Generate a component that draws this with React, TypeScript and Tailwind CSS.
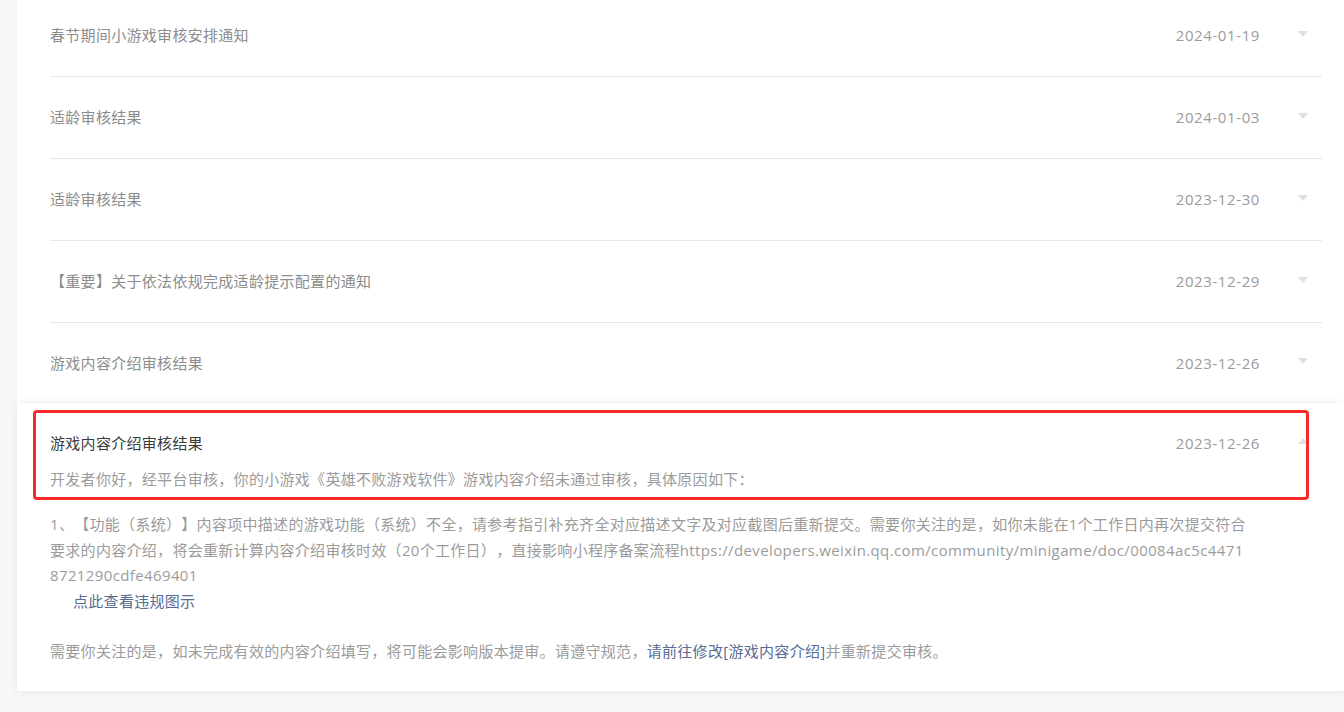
const FONT = {
  fontFamily: '"Open Sans", "Noto Sans CJK SC", "Microsoft YaHei", sans-serif',
};

type Notice = { title: string; date: string };

const notices: Notice[] = [
  { title: '春节期间小游戏审核安排通知', date: '2024-01-19' },
  { title: '适龄审核结果', date: '2024-01-03' },
  { title: '适龄审核结果', date: '2023-12-30' },
  { title: '【重要】关于依法依规完成适龄提示配置的通知', date: '2023-12-29' },
  { title: '游戏内容介绍审核结果', date: '2023-12-26' },
];

const reason =
  '1、【功能（系统）】内容项中描述的游戏功能（系统）不全，请参考指引补充齐全对应描述文字及对应截图后重新提交。需要你关注的是，如你未能在1个工作日内再次提交符合要求的内容介绍，将会重新计算内容介绍审核时效（20个工作日），直接影响小程序备案流程';
const docUrl = 'https://developers.weixin.qq.com/community/minigame/doc/00084ac5c44718721290cdfe469401';

function Caret({ up }: { up?: boolean }) {
  return (
    <svg width="10" height="6" viewBox="0 0 10 6" className="shrink-0">
      <path d={up ? 'M0 6 L5 0 L10 6 Z' : 'M0 0 L10 0 L5 6 Z'} fill="#e0e0e0" />
    </svg>
  );
}

export default function App() {
  return (
    <div
      className="min-h-screen bg-[#f6f7f9] pl-[17px] overflow-hidden text-[15px] tracking-[0.3px] [text-spacing-trim:space-all]"
      style={FONT}
    >
      <div className="bg-white">
        <div className="-mt-[5px]">
          {notices.map((n, i) => {
            const last = i === notices.length - 1;
            return (
              <div key={i} className="pl-[33px] pr-[22px]">
                <div className={`flex items-center ${last ? 'h-[80px]' : 'h-[82px] border-b border-[#e7e7e7]'}`}>
                  <div className="flex-1 text-[#8c8c8c]">{n.title}</div>
                  <div className="text-[#9b9b9b] tracking-[0.6px]">{n.date}</div>
                  <div className="ml-[38px] mr-[14px] -mt-[4px]"><Caret /></div>
                </div>
              </div>
            );
          })}
        </div>
      </div>

      {/* expanded item */}
      <div className="relative bg-white shadow-[0_0_8px_rgba(0,0,0,0.08)] h-[288px] pt-[27px] pl-[33px] pr-[22px]">
        <div className="absolute left-[16px] top-[7px] w-[1276px] h-[90px] border-[3px] border-[#fa2a2a] rounded-[4px] pointer-events-none" />
        <div className="flex items-center h-[26px]">
          <div className="flex-1 text-[#3a3a3a]">游戏内容介绍审核结果</div>
          <div className="text-[#9b9b9b] tracking-[0.6px]">2023-12-26</div>
          <div className="ml-[38px] mr-[14px] -mt-[4px]"><Caret up /></div>
        </div>
        <div className="mt-[10px] text-[#9b9b9b] leading-[26px]">
          开发者你好，经平台审核，你的小游戏《英雄不败游戏软件》游戏内容介绍未通过审核，具体原因如下：
        </div>
        <div className="mt-[20px] w-[1197px] text-[#9b9b9b] leading-[25.5px] break-all">
          {reason}<span className="tracking-[0.38px]">{docUrl}</span>
        </div>
        <div className="pl-[23px] leading-[25px] text-[#576b95]">点此查看违规图示</div>
        <div className="mt-[24px] leading-[26px] text-[#9b9b9b]">
          需要你关注的是，如未完成有效的内容介绍填写，将可能会影响版本提审。请遵守规范，
          <span className="text-[#576b95]">请前往修改[游戏内容介绍]</span>
          并重新提交审核。
        </div>
      </div>
    </div>
  );
}
